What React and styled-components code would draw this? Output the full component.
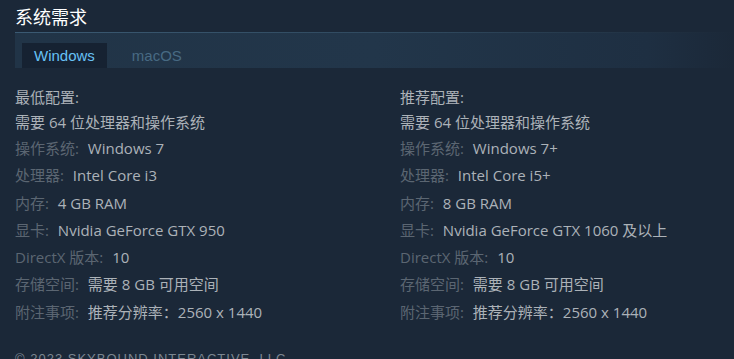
import styled, { createGlobalStyle } from 'styled-components'

const GlobalStyle = createGlobalStyle`
  html, body {
    margin: 0;
    padding: 0;
    background: #1b2838;
  }
  body {
    font-family: "Open Sans", "Noto Sans CJK SC", sans-serif;
    overflow: hidden;
  }
`

const Page = styled.section`
  width: 734px;
  height: 359px;
  background: #1b2838;
  padding: 0 0 0 15px;
  box-sizing: border-box;
  overflow: hidden;
`

const Title = styled.h2`
  margin: 0;
  height: 32px;
  font-family: "Noto Sans CJK SC", sans-serif;
  font-size: 18px;
  font-weight: 400;
  line-height: 33px;
  color: #ffffff;
`

const TabBar = styled.div`
  border-top: 1px solid;
  border-image: linear-gradient(90deg, #3b5a73 0%, #2e475c 60%, #1b2838 100%) 1;
  background: linear-gradient(90deg, #213447 0%, #22364a 50%, #1e2f42 88%, #1b2838 100%);
  height: 36px;
  padding: 10px 0 0 7px;
  box-sizing: border-box;
  display: flex;
  align-items: stretch;
  gap: 13px;
`

const Tab = styled.div`
  padding: 0 12px 1px;
  display: flex;
  align-items: center;
  font-family: "Liberation Sans", Arial, sans-serif;
  font-size: 15px;
  color: ${(p) => (p.$active ? '#67c1f5' : '#486a83')};
  background: ${(p) => (p.$active ? '#162232' : 'transparent')};
`

const Columns = styled.div`
  display: grid;
  grid-template-columns: 385px 1fr;
  padding-top: 17px;
`

const List = styled.ul`
  list-style: none;
  margin: 0;
  padding: 0;
`

const Heading = styled.li`
  font-size: 15px;
  line-height: 25px;
  color: #acb2b8;
`

const Item = styled.li`
  font-size: 15px;
  line-height: ${(p) => (p.$tight ? '25px' : '27.3px')};
  color: #acb2b8;
  white-space: nowrap;

  & > b {
    font-weight: 400;
    color: #5b6672;
    margin-right: 5px;
  }
`

const Footer = styled.div`
  margin-top: 25px;
  font-family: "Liberation Sans", Arial, sans-serif;
  font-size: 13px;
  color: #7b8691;
  letter-spacing: 1px;
`

const minimum = {
  heading: '最低配置:',
  arch: '需要 64 位处理器和操作系统',
  rows: [
    ['操作系统:', 'Windows 7'],
    ['处理器:', 'Intel Core i3'],
    ['内存:', '4 GB RAM'],
    ['显卡:', 'Nvidia GeForce GTX 950'],
    ['DirectX 版本:', '10'],
    ['存储空间:', '需要 8 GB 可用空间'],
    ['附注事项:', '推荐分辨率：2560 x 1440'],
  ],
}

const recommended = {
  heading: '推荐配置:',
  arch: '需要 64 位处理器和操作系统',
  rows: [
    ['操作系统:', 'Windows 7+'],
    ['处理器:', 'Intel Core i5+'],
    ['内存:', '8 GB RAM'],
    ['显卡:', 'Nvidia GeForce GTX 1060 及以上'],
    ['DirectX 版本:', '10'],
    ['存储空间:', '需要 8 GB 可用空间'],
    ['附注事项:', '推荐分辨率：2560 x 1440'],
  ],
}

const Spec = ({ data }) => (
  <List>
    <Heading>{data.heading}</Heading>
    <Item $tight>{data.arch}</Item>
    {data.rows.map(([label, value]) => (
      <Item key={label}>
        <b>{label}</b> {value}
      </Item>
    ))}
  </List>
)

export default function App() {
  return (
    <>
      <GlobalStyle />
      <Page>
        <Title>系统需求</Title>
        <TabBar>
          <Tab $active>Windows</Tab>
          <Tab>macOS</Tab>
        </TabBar>
        <Columns>
          <Spec data={minimum} />
          <Spec data={recommended} />
        </Columns>
        <Footer>© 2023 SKYBOUND INTERACTIVE, LLC.</Footer>
      </Page>
    </>
  )
}
